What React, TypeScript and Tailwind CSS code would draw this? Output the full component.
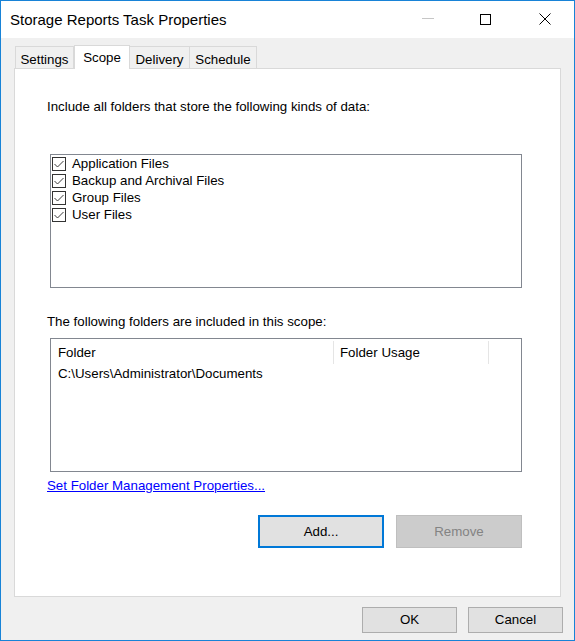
import { ReactNode } from 'react';

const FONT = { fontFamily: '"Liberation Sans", Arial, sans-serif' };

const KINDS = [
  'Application Files',
  'Backup and Archival Files',
  'Group Files',
  'User Files'
];

function Tab({ label, width, active = false }: { label: string; width: number; active?: boolean }) {
  if (active) {
    return (
      <div
        className="relative z-10 -mb-px flex h-[24px] items-start justify-center border border-b-0 border-[#d9d9d9] bg-white pt-[2px] text-[13.3px] text-black"
        style={{ width }}
      >
        {label}
      </div>
    );
  }
  return (
    <div
      className="-ml-px flex h-[22px] items-start justify-center border border-b-0 border-[#d9d9d9] bg-[#f0f0f0] pt-[3px] text-[13.3px] text-black"
      style={{ width }}
    >
      {label}
    </div>
  );
}

function CheckRow({ label }: { label: string }) {
  return (
    <div className="flex h-[17px] items-center">
      <div className="flex h-[14px] w-[14px] items-center justify-center border border-[#333333] bg-white">
        <svg width="12" height="12" viewBox="0 0 12 12">
          <polyline points="1.5,6 4.5,9 10.5,3" fill="none" stroke="#3c3c3c" strokeWidth="1" />
        </svg>
      </div>
      <span className="ml-[6px] text-[13.3px] text-black">{label}</span>
    </div>
  );
}

function DlgButton({ children, className }: { children: ReactNode; className: string }) {
  return (
    <div className={`flex items-center justify-center text-[13.3px] ${className}`}>{children}</div>
  );
}

export default function App() {
  return (
    <div
      className="flex h-[641px] w-[575px] flex-col border border-[#1883d7] bg-[#f0f0f0] text-black"
      style={FONT}
    >
      {/* title bar */}
      <div className="flex h-[37px] shrink-0 items-center bg-white">
        <span className="ml-[9px] text-[15px] leading-none">Storage Reports Task Properties</span>
        <div className="ml-auto flex items-center">
          <svg width="12" height="12" viewBox="0 0 12 12" className="mt-[-1px]">
            <line x1="0" y1="5.5" x2="12" y2="5.5" stroke="#c6c6c6" strokeWidth="1" />
          </svg>
          <svg width="11" height="11" viewBox="0 0 11 11" className="ml-[46px] mt-[-1px]">
            <rect x="0.5" y="0.5" width="10" height="10" fill="none" stroke="#000" strokeWidth="1" />
          </svg>
          <svg width="12" height="12" viewBox="0 0 12 12" className="ml-[48px] mr-[23px] mt-[-1px]">
            <path d="M0.5 0.5 L11.5 11.5 M11.5 0.5 L0.5 11.5" stroke="#000" strokeWidth="1" />
          </svg>
        </div>
      </div>

      {/* tabs */}
      <div className="mx-[13px] mt-[7px] flex h-[23px] shrink-0 items-end pl-[2px]">
        <Tab label="Settings" width={59} />
        <Tab label="Scope" width={56} active />
        <Tab label="Delivery" width={61} />
        <Tab label="Schedule" width={68} />
      </div>

      {/* tab page */}
      <div className="mx-[13px] h-[529px] shrink-0 border border-[#d9d9d9] bg-white pl-[32px]">
        <div className="mt-[30px] h-[15px] text-[13.3px] leading-[15px]">
          Include all folders that store the following kinds of data:
        </div>

        <div className="ml-[3px] mt-[40px] h-[134px] w-[472px] border border-[#828790] bg-white pl-[1px]">
          {KINDS.map((k) => (
            <CheckRow key={k} label={k} />
          ))}
        </div>

        <div className="mt-[26px] h-[15px] text-[13.3px] leading-[15px]">
          The following folders are included in this scope:
        </div>

        <div className="ml-[3px] mt-[9px] h-[134px] w-[472px] border border-[#828790] bg-white">
          <div className="flex h-[25px] pt-[2px] text-[13.3px]">
            <div className="flex w-[283px] items-center border-r border-[#e5e5e5] pl-[7px]">Folder</div>
            <div className="flex w-[155px] items-center border-r border-[#e5e5e5] pl-[6px]">Folder Usage</div>
          </div>
          <div className="flex h-[19px] items-center pl-[7px] text-[13.3px]">
            C:\Users\Administrator\Documents
          </div>
        </div>

        <div className="mt-[6px] h-[15px] text-[13.3px] leading-[15px] text-[#0000ff] underline">
          Set Folder Management Properties...
        </div>

        <div className="ml-[3px] mt-[22px] flex w-[472px] justify-end gap-[12px]">
          <DlgButton className="h-[33px] w-[126px] border-2 border-[#0078d7] bg-[#e1e1e1]">Add...</DlgButton>
          <DlgButton className="h-[33px] w-[126px] border border-[#bfbfbf] bg-[#cccccc] text-[#838383]">
            Remove
          </DlgButton>
        </div>
      </div>

      {/* dialog buttons */}
      <div className="mr-[11px] mt-[10px] flex justify-end gap-[11px]">
        <DlgButton className="h-[26px] w-[95px] border border-[#adadad] bg-[#e1e1e1]">OK</DlgButton>
        <DlgButton className="h-[26px] w-[95px] border border-[#adadad] bg-[#e1e1e1]">Cancel</DlgButton>
      </div>
    </div>
  );
}
